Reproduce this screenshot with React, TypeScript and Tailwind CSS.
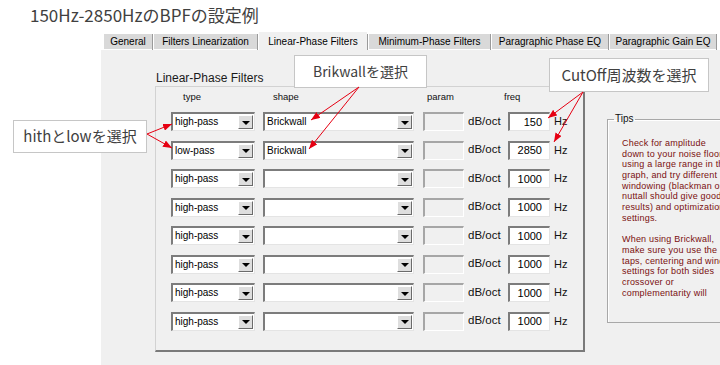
import React from "react";

const rows = [
  { type: "high-pass", shape: "Brickwall", freq: "150" },
  { type: "low-pass", shape: "Brickwall", freq: "2850" },
  { type: "high-pass", shape: "", freq: "1000" },
  { type: "high-pass", shape: "", freq: "1000" },
  { type: "high-pass", shape: "", freq: "1000" },
  { type: "high-pass", shape: "", freq: "1000" },
  { type: "high-pass", shape: "", freq: "1000" },
  { type: "high-pass", shape: "", freq: "1000" },
];

const tabs = [
  { label: "General", w: "w-[48px]" },
  { label: "Filters Linearization", w: "w-[103px]" },
  { label: "Linear-Phase Filters", w: "w-[108px]", active: true },
  { label: "Minimum-Phase Filters", w: "w-[121px]" },
  { label: "Paragraphic Phase EQ", w: "w-[116px]" },
  { label: "Paragraphic Gain EQ", w: "w-[106px]" },
];

const tips = [
  "Check for amplitude",
  "down to your noise floor",
  "using a large range in the",
  "graph, and try different",
  "windowing (blackman or",
  "nuttall should give good",
  "results) and optimization",
  "settings.",
  "",
  "When using Brickwall,",
  "make sure you use the",
  "taps, centering and window",
  "settings for both sides",
  "crossover or",
  "complementarity will",
];

const Combo = ({ text, w }: { text: string; w: string }) => (
  <div
    className={`${w} h-[19px] flex items-center bg-white border-t-2 border-l-2 border-t-[#7c7c7c] border-l-[#7c7c7c] border-b border-r border-b-[#e4e4e4] border-r-[#e4e4e4]`}
  >
    <span className="flex-1 pl-[2px] text-[10px] leading-[12px] text-black whitespace-nowrap">
      {text}
    </span>
    <div className="w-[15px] h-[14px] mr-[1px] flex items-center justify-center bg-[#dedede] border-t border-l border-white border-r border-b border-r-[#6b6b6b] border-b-[#6b6b6b]">
      <div className="w-0 h-0 border-l-[4px] border-r-[4px] border-t-[4px] border-l-transparent border-r-transparent border-t-black mt-[1px]" />
    </div>
  </div>
);

const App = () => {
  return (
    <div
      className="relative w-[720px] h-[365px] overflow-hidden bg-white"
      style={{ fontFamily: "'Liberation Sans', Arial, sans-serif" }}
    >
      {/* title */}
      <div
        className="h-[32px] pl-[30px] pt-[3px] text-[17px] leading-[24px] text-[#404040]"
        style={{ fontFamily: "'Noto Sans CJK JP', sans-serif" }}
      >
        150Hz-2850HzのBPFの設定例
      </div>

      {/* app screenshot */}
      <div className="ml-[100px] w-[620px] h-[333px] flex flex-col">
        {/* tabs */}
        <div className="h-[18px] flex items-end pl-[4px]">
          {tabs.map((t) => (
            <React.Fragment key={t.label}>
              <div
                className={`${t.w} flex items-center justify-center text-[10px] text-black whitespace-nowrap ${
                  t.active ? "h-[18px] bg-[#f0f0f0]" : "h-[16px] bg-[#d9d9d9] border-b border-white"
                }`}
              >
                {t.label}
              </div>
              <div className="w-[2px] h-[16px] border-l border-l-[#9a9a9a] border-r border-r-white" />
            </React.Fragment>
          ))}
          <div className="flex-1 h-[16px] border-b border-white" />
        </div>

        {/* panel */}
        <div className="flex-1 bg-[#f0f0f0] border-l border-white overflow-hidden flex pl-[54px] pt-[20px]">
          <div className="flex flex-col shrink-0">
            <div className="h-[16px] text-[12px] leading-[16px] text-[#1a1a1a] pl-[1px]">
              Linear-Phase Filters
            </div>
            <div className="w-[430px] h-[266px] border-t border-l border-t-[#d2d2d2] border-l-[#d2d2d2] border-r-2 border-b-2 border-r-[#7a7a7a] border-b-[#7a7a7a] pl-[15px] pt-[5px]">
              <div className="flex h-[10px] items-center text-[9.5px] leading-[10px] text-[#111] mb-[10px]">
                <span className="w-[84px] pl-[12px]">type</span>
                <span className="ml-[8px] w-[151px] pl-[10px]">shape</span>
                <span className="ml-[9px] w-[41px] pl-[4px]">param</span>
                <span className="ml-[40px]">freq</span>
              </div>
              <div className="flex flex-col gap-[9.5px]">
                {rows.map((r, i) => (
                  <div key={i} className="flex items-center h-[19px]">
                    <Combo text={r.type} w="w-[84px]" />
                    <div className="ml-[8px]">
                      <Combo text={r.shape} w="w-[151px]" />
                    </div>
                    <div className="ml-[9px] w-[41px] h-[19px] border-t-2 border-l-2 border-t-[#a6a6a6] border-l-[#a6a6a6] border-b border-r border-b-white border-r-white" />
                    <span className="ml-[4px] w-[36px] text-[11.5px] text-[#111] whitespace-nowrap">
                      dB/oct
                    </span>
                    <div className="ml-[4px] w-[42px] h-[19px] bg-white border-t-2 border-l-2 border-t-[#7c7c7c] border-l-[#7c7c7c] border-b border-r border-b-[#e4e4e4] border-r-[#e4e4e4] flex items-center justify-end pr-[7px] text-[11px] text-black">
                      {r.freq}
                    </div>
                    <span className="ml-[4px] text-[11px] text-[#111]">Hz</span>
                  </div>
                ))}
              </div>
            </div>
          </div>

          {/* tips */}
          <fieldset className="ml-[22px] mt-[43px] w-[150px] h-[210px] shrink-0 border border-[#a8a8a8] shadow-[inset_1px_1px_0_#ffffff] pl-[14px] pt-[13px]">
            <legend className="-ml-[8px] px-[1px] text-[10px] leading-[12px] text-[#111]">Tips</legend>
            <div
              className="text-[9px] leading-[10.7px] tracking-[0.2px] text-[#7a0f0f] whitespace-nowrap"
              style={{ fontFamily: "'Liberation Sans Narrow', 'Liberation Sans', Arial, sans-serif" }}
            >
              {tips.map((l, i) => (
                <div key={i} className="h-[10.7px]">
                  {l}
                </div>
              ))}
            </div>
          </fieldset>
        </div>
      </div>

      {/* callouts */}
      <div
        className="absolute left-[294px] top-[55px] w-[133px] h-[33px] bg-white border border-[#c6c6c6] flex items-center justify-center text-[14px] text-[#404040]"
        style={{ fontFamily: "'Noto Sans CJK JP', sans-serif" }}
      >
        Brikwallを選択
      </div>
      <div
        className="absolute left-[549px] top-[58px] w-[160px] h-[34px] bg-white border border-[#c6c6c6] flex items-center justify-center text-[15px] text-[#404040]"
        style={{ fontFamily: "'Noto Sans CJK JP', sans-serif" }}
      >
        CutOff周波数を選択
      </div>
      <div
        className="absolute left-[13px] top-[120px] w-[134px] h-[33px] bg-white border border-[#c6c6c6] flex items-center justify-center text-[15px] text-[#404040]"
        style={{ fontFamily: "'Noto Sans CJK JP', sans-serif" }}
      >
        hithとlowを選択
      </div>

      {/* arrows */}
      <svg className="absolute inset-0 pointer-events-none" width="720" height="365" viewBox="0 0 720 365">
        <defs>
          <marker id="ah" markerWidth="9" markerHeight="7" refX="9" refY="3.5" orient="auto" markerUnits="userSpaceOnUse">
            <path d="M0,0 L9,3.5 L0,7 z" fill="#e60012" />
          </marker>
        </defs>
        <g stroke="#e60012" strokeWidth="1" fill="none">
          <line x1="359" y1="87" x2="311" y2="120" markerEnd="url(#ah)" />
          <line x1="359" y1="87" x2="309" y2="149" markerEnd="url(#ah)" />
          <line x1="583" y1="92" x2="548" y2="118" markerEnd="url(#ah)" />
          <line x1="583" y1="92" x2="554" y2="142" markerEnd="url(#ah)" />
          <line x1="147" y1="134" x2="172" y2="124" markerEnd="url(#ah)" />
          <line x1="147" y1="134" x2="172" y2="148" markerEnd="url(#ah)" />
        </g>
      </svg>
    </div>
  );
};

export default App;
